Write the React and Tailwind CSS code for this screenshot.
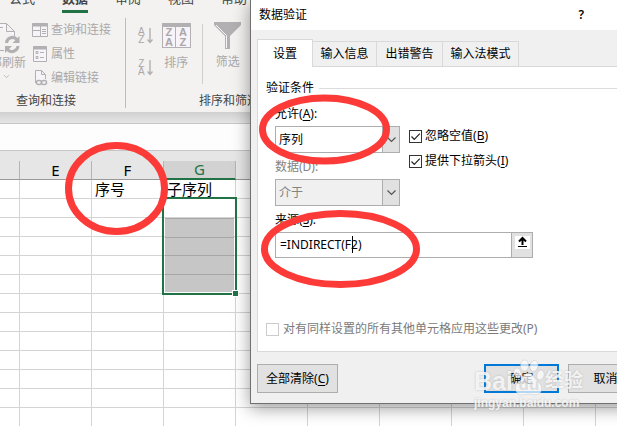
import { ChevronDown } from 'lucide-react'

const ABAS = ['公式', '数据', '审阅', '视图', '帮助']
const COLUNAS = ['D', 'E', 'F', 'G', 'H', 'I', 'J', 'K', 'L', 'M']
const LINHAS = Array.from({ length: 14 }, (_, i) => i + 1)
const CELULAS = { F1: '序号', G1: '子序列' }

// ── Ícones da faixa de opções
function IconeAtualizar() {
  return (
    <svg width="36" height="32" viewBox="0 0 36 32" fill="none" stroke="#b3b0b3">
      <path d="M8 1.500H22.500L30.500 9.500V14M22.500 1.500V9.500H30.500M8 5.500H19M8 28.500H20" fill="#f7f5f8" />
      <path d="M22.500 21a6 6 0 0 1 10.500-3.500M34 24a6 6 0 0 1-10.500 3.500" strokeWidth="3" />
      <path d="M35.500 14v7h-7zM21 31v-7h7z" fill="#b3b0b3" stroke="none" />
    </svg>
  )
}

function IconeConsultas() {
  return (
    <svg width="16" height="14" viewBox="0 0 16 14" fill="none" stroke="#b3b0b3">
      <path d="M.5.5h15v13H.5z" fill="#f7f3f8" />
      <path d="M0 2h16" strokeWidth="3" />
      <path d="M8.500 3v10M1 7.500h7M10 6.500h4M10 8.500h4M10 10.500h4" />
    </svg>
  )
}

function IconePropriedades() {
  return (
    <svg width="16" height="16" viewBox="0 0 16 16" fill="none" stroke="#b3b0b3">
      <path d="M1.500.5h13v15h-13z" fill="#f7f3f8" />
      <path d="M1 2h14" strokeWidth="3" />
      <path d="M8 6.500h4M8 11.500h4M4 5.500h2v2H4zM4 10.500h2v2H4z" />
    </svg>
  )
}

function IconeVinculos() {
  return (
    <svg width="16" height="16" viewBox="0 0 16 16" fill="none" stroke="#b3b0b3">
      <path d="M3.500 13V.5h6l4 4V9M9.500.5v4h4" fill="#f7f3f8" />
      <rect x="4.500" y="10.500" width="5" height="4" rx="2" strokeWidth="1.500" />
      <rect x="9.500" y="10.500" width="5" height="4" rx="2" strokeWidth="1.500" />
    </svg>
  )
}

function IconeOrdem({ letras }) {
  return (
    <span className="flex items-center gap-0.5 font-['Liberation_Sans'] text-[10px] leading-[8px] text-[#aaa7aa]">
      <span className="flex flex-col">
        <span>{letras[0]}</span>
        <span>{letras[1]}</span>
      </span>
      <svg width="6" height="16" viewBox="0 0 6 16" fill="none" stroke="#b3b0b3">
        <path d="M3 0v15M.5 11.500 3 14.500l2.500-3" strokeWidth="1.400" />
      </svg>
    </span>
  )
}

function IconeClassificar() {
  return (
    <span className="grid h-[25px] w-[29px] grid-cols-2 border border-t-4 border-[#b3b0b3] bg-[#f7f3f8] font-['Liberation_Sans']
                     text-center text-[11px] leading-[10px] font-bold text-[#aaa7aa]">
      <span className="border-r border-[#b3b0b3]">Z</span>
      <span>A</span>
      <span className="border-r border-[#b3b0b3]">A</span>
      <span>Z</span>
    </span>
  )
}

function IconeFiltro() {
  return (
    <svg width="28" height="28" viewBox="0 0 28 28">
      <path d="M0 0h27v3L16 14v13h-5V14L0 3z" fill="#b3b0b3" />
      <path d="M2 3l10.500 10.500V26" fill="none" stroke="#f7f3f8" />
    </svg>
  )
}

function Faixa() {
  return (
    <header className="bg-[#f3f2f1]">
      <nav className="flex h-[13px] items-end gap-[27px] overflow-hidden pl-[9px]">
        {ABAS.map(aba => (
          <a key={aba} href="#" className={`h-[24px] border-b-3 text-[13px] leading-[18px] whitespace-nowrap text-[#444]
            ${aba === '数据' ? 'border-[#217346] font-bold' : 'border-transparent'}`}>
            {aba}
          </a>
        ))}
      </nav>
      <div className="flex h-[99px] overflow-hidden pt-[5px] text-xs whitespace-nowrap text-[#aaa8a8]">
        {/* Consultas e conexões */}
        <section className="flex h-[90px] w-[126px] flex-none flex-col justify-between border-r border-[#bdbbbb]">
          <div className="flex gap-1.5">
            <button className="-ml-[22px] flex w-12 flex-col items-center pt-1 leading-[18px]">
              <IconeAtualizar />
              <span>全部刷新</span>
              <ChevronDown size={9} className="ml-2" />
            </button>
            <div className="flex flex-col gap-1.5 leading-[18px]">
              <button className="flex items-center gap-[3px] pt-[3px]"><IconeConsultas />查询和连接</button>
              <button className="flex items-center gap-[3px]"><IconePropriedades />属性</button>
              <button className="flex items-center gap-[3px]"><IconeVinculos />编辑链接</button>
            </div>
          </div>
          <h2 className="pl-4 leading-[14px] text-[#444]">查询和连接</h2>
        </section>
        {/* Classificar e filtrar */}
        <section className="flex h-[90px] flex-none flex-col justify-between pl-3">
          <div className="flex">
            <div className="flex flex-col gap-4 pt-[10px]">
              <button><IconeOrdem letras="AZ" /></button>
              <button><IconeOrdem letras="ZA" /></button>
            </div>
            <button className="ml-[9px] flex flex-col items-center gap-1.5 pt-[5px] leading-[18px]">
              <IconeClassificar />排序
            </button>
            <div className="mt-1.5 ml-[11px] h-[60px] w-px bg-[#cfcdcd]" />
            <button className="ml-[11px] flex flex-col items-center gap-[3px] pt-1 leading-[18px]">
              <IconeFiltro />筛选
            </button>
          </div>
          <h2 className="pl-[61px] leading-[14px] text-[#444]">排序和筛选</h2>
        </section>
      </div>
    </header>
  )
}

function Selecao() {
  return (
    <div className="absolute -top-[2px] -left-[2px] h-[98px] w-[75px] border-2 border-[#217346] p-px">
      <div className="mt-[18px] flex h-[74px] flex-col divide-y divide-[#a6a6a6] border-t border-[#a6a6a6] bg-[#c6c6c6]">
        <div className="flex-1" />
        <div className="flex-1" />
        <div className="flex-1" />
        <div className="flex-1" />
      </div>
      <div className="absolute -right-1 -bottom-1 size-[7px] border border-white bg-[#217346]" />
    </div>
  )
}

function Planilha() {
  return (
    <main>
      <div className="h-[11px] bg-linear-to-b from-[#d0d0d0] to-[#e6e6e6]" />
      <div className="h-[28px] border-y border-[#c6c6c6] bg-[#fdfdfd]" />
      <div className="h-[10px] bg-[#e6e6e6]" />
      <table className="w-[668px] table-fixed border-separate border-spacing-0 text-[15px] leading-[18px]">
        <thead>
          <tr>
            {COLUNAS.map(col => (
              <th key={col} className={`h-[19px] border-r border-[#b5b5b5] p-0 text-center font-normal
                ${col === 'D' ? 'w-[20px]' : 'w-[72px]'}
                ${col === 'G' ? 'border-b-2 border-b-[#217346] bg-[#d2d2d2] leading-[17px] text-[#217346]' : 'border-b border-b-[#999] bg-[#e6e6e6]'}`}>
                {col !== 'D' && col}
              </th>
            ))}
          </tr>
        </thead>
        <tbody>
          {LINHAS.map(linha => (
            <tr key={linha}>
              {COLUNAS.map(col => (
                <td key={col} className={`h-[19px] border-r border-b border-[#d4d4d4] p-0 pl-[3px] ${col + linha === 'G2' ? 'relative' : ''}`}>
                  {CELULAS[col + linha]}
                  {col + linha === 'G2' && <Selecao />}
                </td>
              ))}
            </tr>
          ))}
        </tbody>
      </table>
    </main>
  )
}

// Rótulo com a tecla de atalho sublinhada
function Rotulo({ texto, tecla, fim = '', ...props }) {
  return <label {...props}>{texto}(<u className="underline-offset-2">{tecla}</u>){fim}</label>
}

function Lista({ id, valor, disabled }) {
  return (
    <div className="relative mt-[3px] h-[27px] w-[125px]">
      <select id={id} disabled={disabled} defaultValue={valor}
        className="size-full appearance-none border border-[#adadad] bg-white pl-[3px] disabled:bg-[#f0f0f0] disabled:text-[#838383] disabled:opacity-100">
        <option>{valor}</option>
      </select>
      <span className="pointer-events-none absolute inset-y-0 right-0 flex w-[18px] items-center justify-center border border-[#adadad] bg-[#e1e1e1]">
        <svg width="9" height="6" viewBox="0 0 9 6" fill="none" stroke="#555"><path d="M.5.5l4 4 4-4" strokeWidth="1.200" /></svg>
      </span>
    </div>
  )
}

function Caixa({ id, ...props }) {
  return (
    <span className="relative size-[13px] flex-none">
      <input id={id} type="checkbox"
        className="peer block size-full appearance-none border border-[#333] bg-white disabled:border-[#ccc]" {...props} />
      <svg viewBox="0 0 13 13" fill="none" stroke="#222" className="pointer-events-none absolute inset-0 hidden size-[13px] peer-checked:block">
        <path d="M2.500 6.500l2.800 2.800 5.500-5.600" strokeWidth="1.200" />
      </svg>
    </span>
  )
}

function Dialogo() {
  const aba = 'flex items-center justify-center border-t border-r border-[#d9d9d9]'
  return (
    <div role="dialog" aria-labelledby="titulo"
      className="absolute top-0 left-[250px] w-[400px] border border-t-0 border-[#707070] bg-[#f0f0f0] text-xs leading-[18px] whitespace-nowrap shadow-[0_4px_16px_rgba(0,0,0,0.4)]">
      <div className="flex h-[30px] items-center justify-between bg-white pr-[65px] pl-2">
        <h1 id="titulo">数据验证</h1>
        <button className="font-semibold">?</button>
      </div>
      <div className="px-1.5 pb-[10px]">
        <div role="tablist" className="flex h-9 items-end">
          <button role="tab" aria-selected="true" className={`${aba} relative z-10 -mb-px h-7 w-14 border-l bg-white`}>设置</button>
          <button role="tab" className={`${aba} h-[25px] w-16`}>输入信息</button>
          <button role="tab" className={`${aba} h-[25px] w-[66px]`}>出错警告</button>
          <button role="tab" className={`${aba} h-[25px] w-[76px]`}>输入法模式</button>
        </div>
        <div className="border border-[#d9d9d9] bg-white px-2 pt-3 pb-[13px]">
          <div className="flex items-center gap-[5px]">
            <h2>验证条件</h2>
            <div className="h-px flex-1 bg-[#dcdcdc]" />
          </div>
          <div className="mt-2 pl-[9px]">
            <div className="flex gap-[9px]">
              <div className="flex flex-col">
                <Rotulo htmlFor="permitir" texto="允许" tecla="A" fim=":" />
                <Lista id="permitir" valor="序列" />
                <label htmlFor="dados" className="mt-[5px] text-[#838383]">数据(D):</label>
                <Lista id="dados" valor="介于" disabled />
              </div>
              <div className="flex flex-col gap-[7px] pt-[22px]">
                <div className="flex items-center gap-[3px]">
                  <Caixa id="ignorar" defaultChecked />
                  <Rotulo htmlFor="ignorar" texto="忽略空值" tecla="B" />
                </div>
                <div className="flex items-center gap-[3px]">
                  <Caixa id="seta" defaultChecked />
                  <Rotulo htmlFor="seta" texto="提供下拉箭头" tecla="I" />
                </div>
              </div>
            </div>
            <div className="mt-[5px]">
              <Rotulo htmlFor="fonte" texto="来源" tecla="S" fim=":" className="block" />
              <div className="relative mt-[3px] flex h-[26px] w-[258px] border border-[#adadad]">
                <input id="fonte" defaultValue="=INDIRECT(F2)" className="min-w-0 flex-1 pl-1 outline-none" />
                <span className="absolute top-[3px] left-[76px] h-[17px] w-px bg-black" />
                <button aria-label="折叠" className="flex w-[21px] justify-center border-l border-[#adadad] bg-[#e1e1e1] pt-[3px]">
                  <svg width="15" height="13" viewBox="0 0 15 13" fill="none" stroke="#000">
                    <path d="M0 0h15v13H0z" fill="#fff" stroke="none" />
                    <path d="M7.500 9V3M4 5.500l3.500-3.500L11 5.500" strokeWidth="2" />
                    <path d="M3 10.500h9" />
                  </svg>
                </button>
              </div>
            </div>
          </div>
          <div className="mt-[62px] flex items-center gap-1 text-[#7a7a7a]">
            <Caixa id="aplicar" disabled />
            <label htmlFor="aplicar">对有同样设置的所有其他单元格应用这些更改(P)</label>
          </div>
        </div>
        <div className="mt-3 flex gap-[9px]">
          <button className="mr-auto h-[29px] w-[81px] border border-[#adadad] bg-[#e1e1e1]">全部清除(<u className="underline-offset-2">C</u>)</button>
          <button className="h-[29px] w-[75px] border-2 border-[#0078d7] bg-[#e1e1e1]">确定</button>
          <button className="h-[29px] w-[75px] border border-[#adadad] bg-[#e1e1e1]">取消</button>
        </div>
      </div>
    </div>
  )
}

// Círculos vermelhos de destaque
function Marcacoes() {
  return (
    <svg width="617" height="426" fill="none" stroke="#fc3a38" strokeWidth="7" className="pointer-events-none absolute top-0 left-0">
      <ellipse cx="116.500" cy="188.500" rx="48" ry="43" />
      <ellipse cx="324.500" cy="129.500" rx="62" ry="31.500" />
      <ellipse cx="340.500" cy="249" rx="76" ry="35.500" />
    </svg>
  )
}

function MarcaDagua() {
  return (
    <div className="pointer-events-none absolute top-[359px] left-[474px] font-['Liberation_Sans','Noto_Sans_CJK_SC',sans-serif] font-bold
                    whitespace-nowrap text-white/80 [text-shadow:0_0_2px_rgba(150,150,150,0.6)]">
      <div className="flex h-[36px] items-end">
        <span className="text-[25px] leading-7">Bai</span>
        <span className="relative flex h-[36px] w-[32px] items-end justify-center">
          <svg width="32" height="37" viewBox="0 0 32 37" fill="#fff" fillOpacity="0.7" stroke="#bbb" strokeOpacity="0.4" className="absolute inset-0">
            <ellipse cx="4.500" cy="14" rx="3.500" ry="5" transform="rotate(-15 4.500 14)" />
            <ellipse cx="11.500" cy="6.500" rx="4" ry="5.500" />
            <ellipse cx="21" cy="7" rx="4" ry="5.500" transform="rotate(12 21 7)" />
            <ellipse cx="27.500" cy="16" rx="3.500" ry="5" transform="rotate(15 27.500 16)" />
            <path d="M15.500 14c4 0 5 4 8 7s6 5 5 10-5 5-8 4.500-6-.7-9 0-8 .5-9-5 3-7 6-10 3-6.500 7-6.500z" />
          </svg>
          <span className="relative text-[17px] leading-5 text-[#ccc]/60 [text-shadow:none]">du</span>
        </span>
        <span className="text-[19px] leading-7">经验</span>
      </div>
      <div className="text-xs leading-4">jingyan.baidu.com</div>
    </div>
  )
}

export default function App() {
  return (
    <div className="relative h-screen overflow-hidden bg-white font-['Noto_Sans','Noto_Sans_CJK_SC',sans-serif] text-black">
      <Faixa />
      <Planilha />
      <Dialogo />
      <Marcacoes />
      <MarcaDagua />
    </div>
  )
}
